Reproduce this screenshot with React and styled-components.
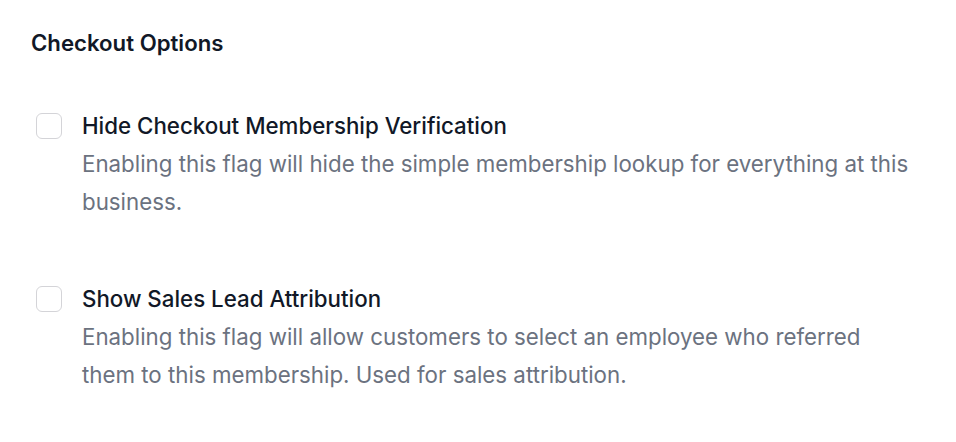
import React from "react";
import styled, { createGlobalStyle } from "styled-components";

const Global = createGlobalStyle`
  html, body { margin: 0; padding: 0; background: #ffffff; }
  body { font-family: Inter, "Noto Sans", sans-serif; -webkit-font-smoothing: antialiased; }
`;

const Page = styled.div`
  padding: 29px 30px 0 31px;
  display: flex;
  flex-direction: column;
`;

const Heading = styled.h2`
  margin: 0;
  font-size: 22.2px;
  line-height: 28px;
  font-weight: 600;
  color: #111827;
`;

const List = styled.div`
  display: flex;
  flex-direction: column;
  gap: 59px;
  margin-top: 50px;
`;

const Row = styled.label`
  display: flex;
  align-items: flex-start;
  gap: 20px;
  padding-left: 5px;
  cursor: pointer;
`;

const Box = styled.input.attrs({ type: "checkbox" })`
  appearance: none;
  margin: 6px 0 0 0;
  width: 26px;
  height: 26px;
  flex: none;
  border: 1px solid #d4d4d8;
  border-radius: 6px;
  background: #fff;
`;

const Text = styled.div`
  display: flex;
  flex-direction: column;
`;

const Label = styled.span`
  font-size: 22.3px;
  line-height: 38px;
  font-weight: 500;
  color: #111827;
`;

const Desc = styled.span`
  font-size: 22.3px;
  line-height: 38px;
  font-weight: 400;
  color: #6b7280;
  max-width: 831px;
`;

const options = [
  {
    title: "Hide Checkout Membership Verification",
    desc: "Enabling this flag will hide the simple membership lookup for everything at this business.",
  },
  {
    title: "Show Sales Lead Attribution",
    desc: "Enabling this flag will allow customers to select an employee who referred them to this membership. Used for sales attribution.",
  },
];

export default function App() {
  return (
    <>
      <Global />
      <Page>
        <Heading>Checkout Options</Heading>
        <List>
          {options.map((o) => (
            <Row key={o.title}>
              <Box />
              <Text>
                <Label>{o.title}</Label>
                <Desc>{o.desc}</Desc>
              </Text>
            </Row>
          ))}
        </List>
      </Page>
    </>
  );
}
